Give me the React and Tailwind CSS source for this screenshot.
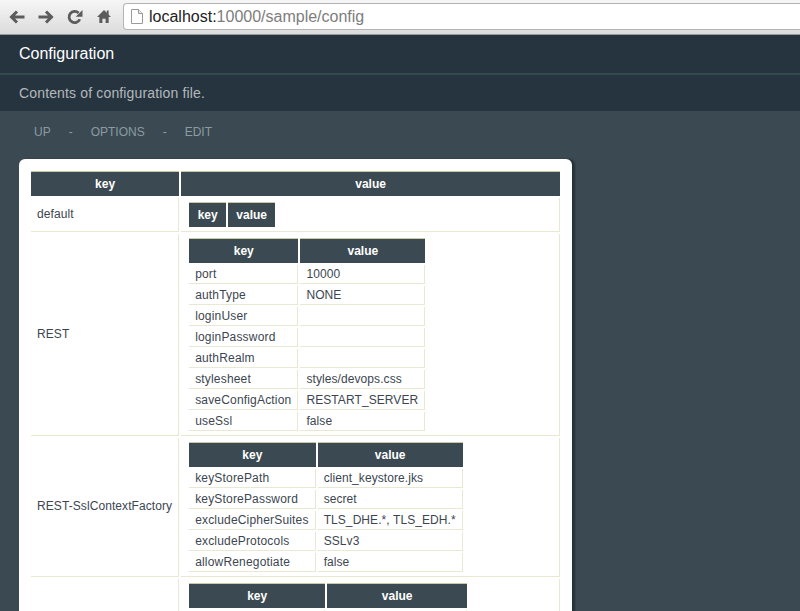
import React from 'react';

const sections = [
  {
    name: 'default',
    rows: [],
  },
  {
    name: 'REST',
    rows: [
      ['port', '10000'],
      ['authType', 'NONE'],
      ['loginUser', ''],
      ['loginPassword', ''],
      ['authRealm', ''],
      ['stylesheet', 'styles/devops.css'],
      ['saveConfigAction', 'RESTART_SERVER'],
      ['useSsl', 'false'],
    ],
  },
  {
    name: 'REST-SslContextFactory',
    rows: [
      ['keyStorePath', 'client_keystore.jks'],
      ['keyStorePassword', 'secret'],
      ['excludeCipherSuites', 'TLS_DHE.*, TLS_EDH.*'],
      ['excludeProtocols', 'SSLv3'],
      ['allowRenegotiate', 'false'],
    ],
  },
];

const Th = ({ children, className = '' }) => (
  <th className={`h-[25px] border-t border-[#c9c9a3] bg-[#3b4a52] px-2 py-0 text-center text-xs font-bold text-white ${className}`}>
    {children}
  </th>
);

const Td = ({ children, className = '' }) => (
  <td className={`h-[19px] whitespace-nowrap border-r border-b border-[#e9e9d3] py-0 text-xs text-[#3c4650] ${className}`}>
    {children}
  </td>
);

const Inner = ({ rows, keyWidth = '', valueWidth = '' }) => (
  <table className="border-separate border-spacing-[2px]">
    <thead>
      <tr>
        <Th className={keyWidth}>key</Th>
        <Th className={valueWidth}>value</Th>
      </tr>
    </thead>
    <tbody>
      {rows.map(([k, v], i) => (
        <tr key={k + i}>
          <Td className="px-1.5 tracking-[0.18px]">{k}</Td>
          <Td className="px-1.5 tracking-[0.08px]">{v}</Td>
        </tr>
      ))}
    </tbody>
  </table>
);

const BrowserBar = () => (
  <div className="flex h-[35px] shrink-0 items-start border-b border-[#9a9a9a] bg-gradient-to-b from-[#f6f6f6] to-[#dcdcdc]">
    <div className="flex h-[33px] w-[123px] shrink-0 items-center pl-[2px] text-[#5c5c5c]">
      <div className="flex w-[29px] justify-center">
        <svg width="16" height="14" viewBox="0 0 16 14"><path d="M8 1.5 2.5 7 8 12.5M3 7h12.5" fill="none" stroke="currentColor" strokeWidth="3" /></svg>
      </div>
      <div className="flex w-[29px] justify-center">
        <svg width="16" height="14" viewBox="0 0 16 14"><path d="M8 1.5 13.5 7 8 12.5M13 7H.5" fill="none" stroke="currentColor" strokeWidth="3" /></svg>
      </div>
      <div className="flex w-[29px] justify-center">
        <svg width="16" height="16" viewBox="0 0 16 16"><path d="M12.8 10.2A5.6 5.6 0 1 1 11.6 4" fill="none" stroke="currentColor" strokeWidth="2.8" /><path d="M15.5 1v6.8H8.7z" fill="currentColor" /></svg>
      </div>
      <div className="flex w-[29px] justify-center">
        <svg width="14" height="15" viewBox="0 0 15 16"><path d="M7.5 1 0 8.5h2.5V15h3.3v-4.5h3.4V15h3.3V8.5H15l-2.5-2.5V1.5h-2v2.5z" fill="currentColor" /></svg>
      </div>
    </div>
    <div className="mt-[3px] flex h-[27px] flex-1 items-center gap-[6px] rounded-l-sm border border-r-0 border-[#b4b4b4] bg-white pl-[7px] text-base">
      <svg width="12" height="15" viewBox="0 0 12 15"><path d="M.5.5h7l4 4v10H.5z" fill="#fff" stroke="#9a9a9a" /><path d="M7.5.5v4h4" fill="#e8e8e8" stroke="#9a9a9a" /></svg>
      <span className="text-[#222]">
        localhost:<span className="text-[#7d7d7d]">10000/sample/config</span>
      </span>
    </div>
  </div>
);

export default function App() {
  return (
    <div className="flex h-[611px] flex-col overflow-hidden bg-[#3b4a52] font-['Liberation_Sans',Arial,sans-serif]">
      <BrowserBar />
      <div className="flex h-[38px] shrink-0 items-center bg-[#263440] pl-[19px] text-base text-white">Configuration</div>
      <div className="h-0.5 shrink-0 bg-[#33494c]" />
      <div className="flex h-[36px] shrink-0 items-center bg-[#263440] pl-[19px] text-sm tracking-[0.15px] text-[#b3b8ba]">Contents of configuration file.</div>
      <div className="mb-[6px] flex h-[42px] shrink-0 items-center gap-[18px] pl-[34px] text-xs text-[#8b9aa3]">
        <span>UP</span>
        <span>-</span>
        <span>OPTIONS</span>
        <span>-</span>
        <span>EDIT</span>
      </div>
      <div className="ml-[19px] w-[553px] shrink-0 rounded-t-md bg-white p-2.5 shadow-[3px_0_2px_#263238]">
        <table className="w-full border-separate border-spacing-[2px]">
          <thead>
            <tr>
              <Th className="w-[148px]">key</Th>
              <Th>value</Th>
            </tr>
          </thead>
          <tbody>
            {sections.map((s) => (
              <tr key={s.name}>
                <Td className="px-1.5 pb-0.5 tracking-[0.08px]">{s.name}</Td>
                <Td className="px-1.5 py-0.5">
                  {s.rows.length === 0 ? (
                    <table className="border-separate border-spacing-[2px]">
                      <thead>
                        <tr>
                          <Th className="w-[37px]">key</Th>
                          <Th className="w-[47px]">value</Th>
                        </tr>
                      </thead>
                    </table>
                  ) : (
                    <Inner rows={s.rows} />
                  )}
                </Td>
              </tr>
            ))}
            <tr>
              <Td />
              <Td className="px-1.5 py-0.5">
                <Inner rows={[['', ''], ['', '']]} keyWidth="w-[136px]" valueWidth="w-[140px]" />
              </Td>
            </tr>
          </tbody>
        </table>
      </div>
    </div>
  );
}
